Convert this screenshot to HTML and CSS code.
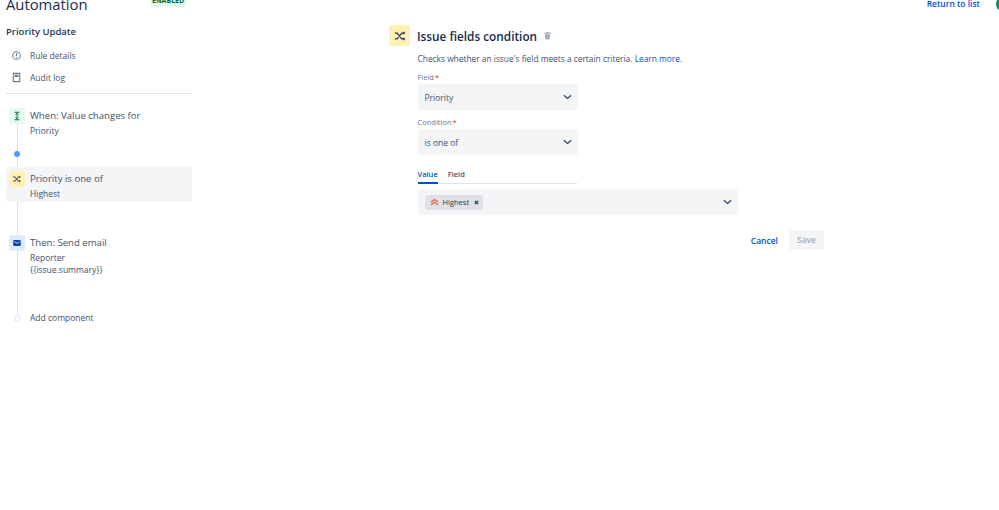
FILE: index.html
```html
<!DOCTYPE html>
<html lang="en">
<head>
<meta charset="utf-8">
<title>Automation</title>
<link rel="stylesheet" href="styles.css">
</head>
<body>
<div class="page">
  <header class="topbar">
    <div class="title-group">
      <h1 class="title">Automation</h1>
      <span class="lozenge">ENABLED</span>
    </div>
    <div class="top-actions">
      <a class="return-link">Return to list</a>
      <span class="avatar"></span>
    </div>
  </header>
  <div class="content">
    <aside class="sidebar">
      <h2 class="rule-name">Priority Update</h2>
      <div class="nav-item">
        <svg class="nav-icon" viewBox="0 0 12 12"><circle cx="6" cy="6" r="4.2" fill="none" stroke="#6b778c" stroke-width="1.1"/><path d="M6 3.4v3.2" stroke="#6b778c" stroke-width="1.2"/><circle cx="6" cy="8.3" r=".6" fill="#6b778c"/></svg>
        <span>Rule details</span>
      </div>
      <div class="nav-item">
        <svg class="nav-icon" viewBox="0 0 12 12"><path d="M2.5 1.5h7v9h-7z" fill="none" stroke="#6b778c" stroke-width="1.2"/><path d="M4 3h4v2.5H4z" fill="#6b778c"/></svg>
        <span>Audit log</span>
      </div>
      <hr class="divider">
      <div class="timeline">
        <div class="step step-when">
          <span class="step-icon icon-green">
            <svg viewBox="0 0 12 12"><path d="M3 1.5h6M3 10.5h6M6 2.5v7M4.2 4.4 6 2.8l1.8 1.6M4.2 7.6 6 9.2l1.8-1.6" fill="none" stroke="#216e4e" stroke-width="1.2"/></svg>
          </span>
          <div class="step-text">
            <div class="step-title">When: Value changes for</div>
            <div class="step-sub">Priority</div>
          </div>
        </div>
        <div class="dot-row"><span class="dot"></span></div>
        <div class="step step-active">
          <span class="step-icon icon-yellow">
            <svg viewBox="0 0 12 12"><path d="M1.5 3.5h2l4 5h2M1.5 8.5h2l4-5h2" fill="none" stroke="#253858" stroke-width="1.2"/><path d="M8.8 2v3l1.9-1.5zM8.8 7v3l1.9-1.5z" fill="#253858"/></svg>
          </span>
          <div class="step-text">
            <div class="step-title">Priority is one of</div>
            <div class="step-sub">Highest</div>
          </div>
        </div>
        <div class="step step-then">
          <span class="step-icon icon-blue">
            <svg viewBox="0 0 12 12"><rect x="1.5" y="2.5" width="9" height="7" rx="1" fill="#0747a6"/><path d="m2.8 4.2 3.2 2.3 3.2-2.3" fill="none" stroke="#deebff" stroke-width="1"/></svg>
          </span>
          <div class="step-text">
            <div class="step-title">Then: Send email</div>
            <div class="step-sub">Reporter</div>
            <div class="step-sub">{{issue.summary}}</div>
          </div>
        </div>
        <div class="add-row">
          <span class="add-dot"></span>
          <span class="add-label">Add component</span>
        </div>
      </div>
    </aside>
    <main class="panel">
      <div class="panel-head">
        <span class="panel-icon">
          <svg viewBox="0 0 12 12"><path d="M1.5 3.5h2l4 5h2M1.5 8.5h2l4-5h2" fill="none" stroke="#253858" stroke-width="1.1"/><path d="M8.8 2v3l1.9-1.5zM8.8 7v3l1.9-1.5z" fill="#253858"/></svg>
        </span>
        <h2 class="panel-title">Issue fields condition</h2>
        <svg class="trash" viewBox="0 0 10 10"><path d="M1 2h8v1H1zM3.5 1h3v1h-3zM2 3.5h6L7.4 9.5H2.6z" fill="#a5adba"/></svg>
      </div>
      <div class="panel-body">
        <p class="desc">Checks whether an issue's field meets a certain criteria. <a class="link">Learn more.</a></p>
        <label class="field-label">Field<span class="req">*</span></label>
        <div class="select narrow">
          <span>Priority</span>
          <svg class="chev" viewBox="0 0 10 6"><path d="m1 1 4 3.6L9 1" fill="none" stroke="#344563" stroke-width="1.5"/></svg>
        </div>
        <label class="field-label cond">Condition<span class="req">*</span></label>
        <div class="select narrow">
          <span>is one of</span>
          <svg class="chev" viewBox="0 0 10 6"><path d="m1 1 4 3.6L9 1" fill="none" stroke="#344563" stroke-width="1.5"/></svg>
        </div>
        <div class="tabs">
          <span class="tab tab-on">Value</span>
          <span class="tab">Field</span>
        </div>
        <div class="select wide">
          <span class="tag">
            <svg class="prio" viewBox="0 0 10 8"><path d="m1 4 4-2.8L9 4M1 7l4-2.8L9 7" fill="none" stroke="#ff5630" stroke-width="1.3"/></svg>
            <span>Highest</span>
            <svg class="tag-x" viewBox="0 0 6 6"><path d="m1 1 4 4M5 1 1 5" stroke="#172b4d" stroke-width="1.3"/></svg>
          </span>
          <svg class="chev" viewBox="0 0 10 6"><path d="m1 1 4 3.6L9 1" fill="none" stroke="#344563" stroke-width="1.5"/></svg>
        </div>
        <div class="actions">
          <a class="cancel">Cancel</a>
          <span class="save">Save</span>
        </div>
      </div>
    </main>
  </div>
</div>
</body>
</html>
```
FILE: styles.css
```css
* { box-sizing: border-box; }
html, body { margin: 0; height: 100%; background: #fff; overflow: hidden; }
body { font-family: "Open Sans", "Noto Sans", sans-serif; color: #172b4d; font-size: 9px; }
.page { width: 999px; height: 510px; overflow: hidden; }
.topbar { display: flex; justify-content: space-between; height: 20px; margin-top: -6px; padding-left: 6px; }
.title-group { display: flex; align-items: flex-start; }
.title { margin: 0; width: 144px; font-size: 14.8px; line-height: 20px; font-weight: 500; }
.lozenge { height: 13px; padding: 0 2px; background: #e3fcef; color: #006644; font-size: 7px; font-weight: 700; line-height: 13px; border-radius: 2px; }
.top-actions { display: flex; align-items: flex-start; padding-top: 4px; }
.return-link { color: #0052cc; font-size: 8.5px; line-height: 12px; font-weight: 600; }
.avatar { width: 8px; height: 12px; margin-left: 16px; margin-right: -5px; border-radius: 50%; background: #1f8a5b; }
.content { display: flex; padding-left: 6px; }
.sidebar { width: 186px; flex: none; }
.rule-name { margin: 11px 0 0; font-size: 9.5px; line-height: 14px; font-weight: 600; color: #253858; }
.nav-item { display: flex; align-items: center; height: 22px; padding-left: 5px; gap: 8px; font-size: 8.5px; color: #42526e; }
.nav-item:first-of-type { margin-top: 5px; }
.nav-icon { width: 11px; height: 11px; }
.divider { height: 1px; margin: 5px 0 0; border: 0; background: #dfe1e6; }
.timeline { position: relative; padding-top: 14px; }
.timeline::before { content: ""; position: absolute; left: 11px; top: 20px; height: 204px; width: 1px; background: #dfe1e6; }
.step { position: relative; display: flex; gap: 5px; padding: 0 0 0 3px; }
.step-icon { flex: none; width: 16px; height: 16px; border-radius: 2px; display: flex; align-items: center; justify-content: center; }
.step-icon svg { width: 10px; height: 10px; }
.icon-green { background: #e3fcef; }
.icon-yellow { background: #fff0b3; }
.icon-blue { background: #deebff; }
.step-text { padding-top: 1px; }
.step-title { font-size: 9.6px; line-height: 14px; color: #42526e; }
.step-sub { font-size: 8.5px; line-height: 12px; color: #42526e; }
.step-sub:nth-child(2) { margin-top: 2px; }
.dot-row { position: relative; height: 30px; padding: 14px 0 0 8px; }
.dot { display: block; width: 6px; height: 6px; border-radius: 50%; background: #4c9aff; }
.step-active { height: 35px; padding-top: 4px; border-radius: 3px; background: #f4f5f7; }
.step-then { margin-top: 33px; }
.add-row { position: relative; display: flex; align-items: center; gap: 9px; margin-top: 36px; padding-left: 8px; }
.add-dot { width: 7px; height: 7px; border-radius: 50%; background: #fff; border: 1px solid #dfe1e6; }
.add-label { font-size: 8.5px; line-height: 12px; color: #42526e; }
.panel { margin-left: 197px; padding-top: 11px; width: 440px; }
.panel-head { display: flex; align-items: center; }
.panel-icon { width: 21px; height: 21px; background: #fff0b3; border-radius: 2px; display: flex; align-items: center; justify-content: center; }
.panel-icon svg { width: 14px; height: 14px; }
.panel-title { margin: 1px 0 0 7px; font-size: 11.8px; line-height: 16px; font-weight: 600; color: #172b4d; }
.trash { width: 9px; height: 9px; margin-left: 6px; }
.panel-body { padding-left: 28.5px; }
.desc { margin: 7px 0 0; font-size: 8.37px; line-height: 12px; color: #42526e; }
.link { color: #0052cc; }
.field-label { display: block; margin-top: 7px; font-size: 7.5px; line-height: 10px; font-weight: 400; color: #6b778c; }
.field-label.cond { margin-top: 7px; }
.req { color: #de350b; margin-left: 1px; }
.select { display: flex; align-items: center; justify-content: space-between; height: 26px; margin-top: 2px; padding: 0 6px 0 7px; border-radius: 3px; background: #f4f5f7; font-size: 8.5px; color: #42526e; }
.narrow { width: 160px; }
.wide { width: 320px; padding-left: 7px; }
.chev { width: 9px; height: 6px; }
.tabs { display: flex; gap: 10px; width: 159px; height: 18px; margin-top: 11px; border-bottom: 1px solid #dfe1e6; }
.tab { height: 18px; font-size: 7.5px; line-height: 17px; color: #42526e; font-weight: 600; }
.tab-on { color: #0052cc; border-bottom: 2px solid #0052cc; }
.wide { margin-top: 5px; }
.tag { display: inline-flex; align-items: center; height: 15px; width: 58px; padding-left: 5px; border-radius: 2px; background: #dfe1e6; font-size: 7.5px; color: #253858; }
.prio { width: 9px; height: 8px; margin-right: 4px; }
.tag-x { width: 5px; height: 5px; margin-left: 5px; }
.actions { display: flex; justify-content: flex-end; align-items: center; width: 406.5px; margin-top: 15px; gap: 11px; }
.cancel { color: #0052cc; font-size: 8.5px; font-weight: 600; }
.save { width: 35px; height: 20px; text-align: center; line-height: 20px; border-radius: 3px; background: #f4f5f7; color: #a5adba; font-size: 8.5px; font-weight: 600; }
```
